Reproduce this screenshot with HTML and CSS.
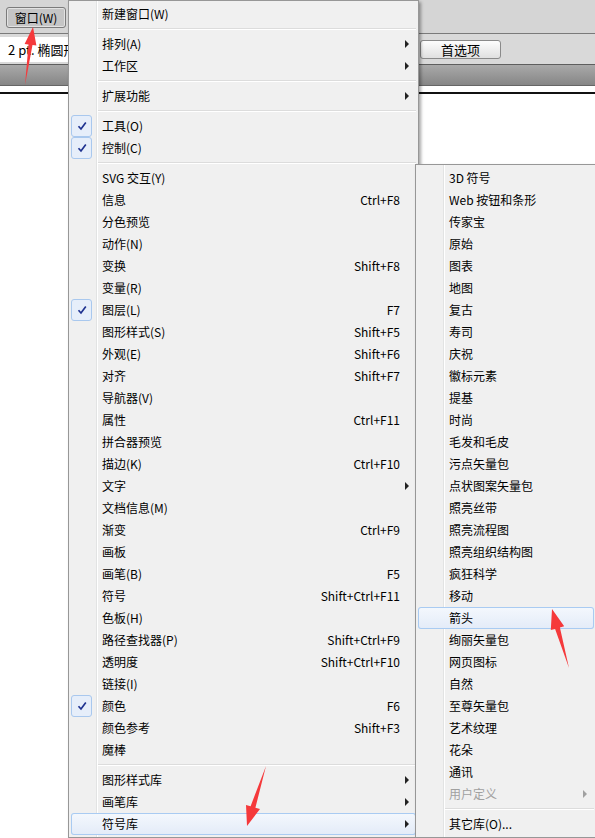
FILE: index.html
```html
<!DOCTYPE html>
<html lang="zh-CN">
<head>
<meta charset="utf-8">
<link rel="stylesheet" href="styles.css">
</head>
<body>
<div class="app">
  <div class="toolbar"><span class="winbtn">窗口(W)</span></div>
  <div class="ctrlbar">
    <div class="field">2 pt. 椭圆形</div>
    <span class="prefs">首选项</span>
  </div>
  <div class="tabbar"></div>
  <div class="doc"><div class="artboard"></div></div>
</div>

<div class="menu main-menu">
  <div class="item"><span></span><span class="label">新建窗口(W)</span><span></span><span></span></div>
  <div class="sep"></div>
  <div class="item"><span></span><span class="label">排列(A)</span><span></span><span class="arrow"></span></div>
  <div class="item"><span></span><span class="label">工作区</span><span></span><span class="arrow"></span></div>
  <div class="sep"></div>
  <div class="item"><span></span><span class="label">扩展功能</span><span></span><span class="arrow"></span></div>
  <div class="sep"></div>
  <div class="item"><span class="check"><svg width="12" height="12" viewBox="0 0 12 12"><path d="M2.5 6.2 L5 9 L9.8 2.6" fill="none" stroke="#1f3290" stroke-width="1.7"/></svg></span><span class="label">工具(O)</span><span></span><span></span></div>
  <div class="item"><span class="check"><svg width="12" height="12" viewBox="0 0 12 12"><path d="M2.5 6.2 L5 9 L9.8 2.6" fill="none" stroke="#1f3290" stroke-width="1.7"/></svg></span><span class="label">控制(C)</span><span></span><span></span></div>
  <div class="sep"></div>
  <div class="item"><span></span><span class="label">SVG 交互(Y)</span><span></span><span></span></div>
  <div class="item"><span></span><span class="label">信息</span><span class="key">Ctrl+F8</span><span></span></div>
  <div class="item"><span></span><span class="label">分色预览</span><span></span><span></span></div>
  <div class="item"><span></span><span class="label">动作(N)</span><span></span><span></span></div>
  <div class="item"><span></span><span class="label">变换</span><span class="key">Shift+F8</span><span></span></div>
  <div class="item"><span></span><span class="label">变量(R)</span><span></span><span></span></div>
  <div class="item"><span class="check"><svg width="12" height="12" viewBox="0 0 12 12"><path d="M2.5 6.2 L5 9 L9.8 2.6" fill="none" stroke="#1f3290" stroke-width="1.7"/></svg></span><span class="label">图层(L)</span><span class="key">F7</span><span></span></div>
  <div class="item"><span></span><span class="label">图形样式(S)</span><span class="key">Shift+F5</span><span></span></div>
  <div class="item"><span></span><span class="label">外观(E)</span><span class="key">Shift+F6</span><span></span></div>
  <div class="item"><span></span><span class="label">对齐</span><span class="key">Shift+F7</span><span></span></div>
  <div class="item"><span></span><span class="label">导航器(V)</span><span></span><span></span></div>
  <div class="item"><span></span><span class="label">属性</span><span class="key">Ctrl+F11</span><span></span></div>
  <div class="item"><span></span><span class="label">拼合器预览</span><span></span><span></span></div>
  <div class="item"><span></span><span class="label">描边(K)</span><span class="key">Ctrl+F10</span><span></span></div>
  <div class="item"><span></span><span class="label">文字</span><span></span><span class="arrow"></span></div>
  <div class="item"><span></span><span class="label">文档信息(M)</span><span></span><span></span></div>
  <div class="item"><span></span><span class="label">渐变</span><span class="key">Ctrl+F9</span><span></span></div>
  <div class="item"><span></span><span class="label">画板</span><span></span><span></span></div>
  <div class="item"><span></span><span class="label">画笔(B)</span><span class="key">F5</span><span></span></div>
  <div class="item"><span></span><span class="label">符号</span><span class="key">Shift+Ctrl+F11</span><span></span></div>
  <div class="item"><span></span><span class="label">色板(H)</span><span></span><span></span></div>
  <div class="item"><span></span><span class="label">路径查找器(P)</span><span class="key">Shift+Ctrl+F9</span><span></span></div>
  <div class="item"><span></span><span class="label">透明度</span><span class="key">Shift+Ctrl+F10</span><span></span></div>
  <div class="item"><span></span><span class="label">链接(I)</span><span></span><span></span></div>
  <div class="item"><span class="check"><svg width="12" height="12" viewBox="0 0 12 12"><path d="M2.5 6.2 L5 9 L9.8 2.6" fill="none" stroke="#1f3290" stroke-width="1.7"/></svg></span><span class="label">颜色</span><span class="key">F6</span><span></span></div>
  <div class="item"><span></span><span class="label">颜色参考</span><span class="key">Shift+F3</span><span></span></div>
  <div class="item"><span></span><span class="label">魔棒</span><span></span><span></span></div>
  <div class="sep"></div>
  <div class="item"><span></span><span class="label">图形样式库</span><span></span><span class="arrow"></span></div>
  <div class="item"><span></span><span class="label">画笔库</span><span></span><span class="arrow"></span></div>
  <div class="item hot"><span></span><span class="label">符号库</span><span></span><span class="arrow"></span></div>
</div>

<div class="menu sub-menu">
  <div class="item"><span></span><span class="label">3D 符号</span><span></span><span></span></div>
  <div class="item"><span></span><span class="label">Web 按钮和条形</span><span></span><span></span></div>
  <div class="item"><span></span><span class="label">传家宝</span><span></span><span></span></div>
  <div class="item"><span></span><span class="label">原始</span><span></span><span></span></div>
  <div class="item"><span></span><span class="label">图表</span><span></span><span></span></div>
  <div class="item"><span></span><span class="label">地图</span><span></span><span></span></div>
  <div class="item"><span></span><span class="label">复古</span><span></span><span></span></div>
  <div class="item"><span></span><span class="label">寿司</span><span></span><span></span></div>
  <div class="item"><span></span><span class="label">庆祝</span><span></span><span></span></div>
  <div class="item"><span></span><span class="label">徽标元素</span><span></span><span></span></div>
  <div class="item"><span></span><span class="label">提基</span><span></span><span></span></div>
  <div class="item"><span></span><span class="label">时尚</span><span></span><span></span></div>
  <div class="item"><span></span><span class="label">毛发和毛皮</span><span></span><span></span></div>
  <div class="item"><span></span><span class="label">污点矢量包</span><span></span><span></span></div>
  <div class="item"><span></span><span class="label">点状图案矢量包</span><span></span><span></span></div>
  <div class="item"><span></span><span class="label">照亮丝带</span><span></span><span></span></div>
  <div class="item"><span></span><span class="label">照亮流程图</span><span></span><span></span></div>
  <div class="item"><span></span><span class="label">照亮组织结构图</span><span></span><span></span></div>
  <div class="item"><span></span><span class="label">疯狂科学</span><span></span><span></span></div>
  <div class="item"><span></span><span class="label">移动</span><span></span><span></span></div>
  <div class="item hot"><span></span><span class="label">箭头</span><span></span><span></span></div>
  <div class="item"><span></span><span class="label">绚丽矢量包</span><span></span><span></span></div>
  <div class="item"><span></span><span class="label">网页图标</span><span></span><span></span></div>
  <div class="item"><span></span><span class="label">自然</span><span></span><span></span></div>
  <div class="item"><span></span><span class="label">至尊矢量包</span><span></span><span></span></div>
  <div class="item"><span></span><span class="label">艺术纹理</span><span></span><span></span></div>
  <div class="item"><span></span><span class="label">花朵</span><span></span><span></span></div>
  <div class="item"><span></span><span class="label">通讯</span><span></span><span></span></div>
  <div class="item disabled"><span></span><span class="label">用户定义</span><span></span><span class="arrow"></span></div>
  <div class="sep"></div>
  <div class="item"><span></span><span class="label">其它库(O)...</span><span></span><span></span></div>
</div>

<svg class="annot" width="595" height="838" viewBox="0 0 595 838">
  <polygon points="33,27 36.4,45.6 32.5,45.1 25,85 28.5,44.5 24.6,44" fill="#f5393b"/>
  <polygon points="247,826 246,805 250.6,806.2 266,766 255.4,807.8 260,809" fill="#f5393b"/>
  <polygon points="552,609 564.2,626.3 559.9,627.5 569,668 555.1,628.9 550.8,630.1" fill="#f5393b"/>
</svg>
</body>
</html>
```
FILE: styles.css
```css
* { box-sizing: border-box; }
html, body { margin: 0; padding: 0; }
body {
  width: 595px;
  height: 838px;
  overflow: hidden;
  position: relative;
  background: #fff;
  font-family: "Noto Sans CJK SC", "Noto Sans", sans-serif;
  font-size: 12px;
  color: #000;
}

/* background application */
.toolbar {
  height: 34px;
  background: #d5d5d5;
  border-bottom: 1px solid #7a7a7a;
  padding: 7px 0 0 6px;
}
.winbtn {
  display: inline-block;
  width: 60px;
  height: 21px;
  line-height: 19px;
  text-align: center;
  border: 1px solid #7b7b7b;
  border-radius: 3px;
  background: #c5c5c5;
  box-shadow: inset 0 0 0 1px #e2e2e2;
  font-size: 12px;
}
.ctrlbar {
  height: 31px;
  background: #d9d9d9;
  border-bottom: 1px solid #5e5e5e;
  display: flex;
  align-items: center;
}
.field {
  width: 80px;
  height: 25px;
  background: #fff;
  line-height: 25px;
  padding-left: 8px;
  font-size: 13px;
  white-space: nowrap;
  overflow: hidden;
}
.prefs {
  margin-left: 340px;
  width: 81px;
  height: 19px;
  border: 1px solid #8a8a8a;
  border-radius: 3px;
  background: linear-gradient(#fdfdfd, #e0e0e0);
  text-align: center;
  line-height: 17px;
  font-size: 13px;
}
.tabbar {
  height: 21px;
  background: linear-gradient(#a9a9a9, #868686);
  border-bottom: 1px solid #666;
}
.doc {
  padding-top: 6px;
}
.artboard {
  border-top: 2px solid #111;
  height: 700px;
}

/* menus */
.menu {
  position: absolute;
  border: 1px solid #979797;
  padding: 2px;
  box-shadow: 2px 2px 3px rgba(0, 0, 0, 0.35);
  background:
    linear-gradient(to right, transparent 27px, #e2e3e3 27px, #e2e3e3 28px, #fff 28px, #fff 29px, transparent 29px),
    #f0f0f0;
}
.main-menu {
  left: 68px;
  top: 0;
  width: 351px;
}
.sub-menu {
  left: 415px;
  top: 164px;
  width: 182px;
}
.item {
  display: grid;
  grid-template-columns: 31px 1fr auto 16px;
  align-items: center;
  height: 22px;
  line-height: 20px;
  white-space: nowrap;
  border-radius: 3px;
}
.label, .key {
  padding-bottom: 1px;
}
.key {
  text-align: right;
}
.arrow {
  width: 0;
  height: 0;
  margin-left: 5px;
  border-left: 4px solid #222;
  border-top: 4px solid transparent;
  border-bottom: 4px solid transparent;
}
.check {
  width: 21px;
  height: 22px;
  border: 1px solid #a9c8ee;
  border-radius: 3px;
  background: #e6eefa;
  display: flex;
  align-items: center;
  justify-content: center;
}
.check svg { display: block; }
.sep {
  height: 8px;
  margin-left: 27px;
  background: linear-gradient(to bottom, transparent 3px, #dcdcdc 3px, #dcdcdc 4px, #fff 4px, #fff 5px, transparent 5px);
}
.hot {
  background: linear-gradient(#f4f8fd, #e3ebf8);
  box-shadow: inset 0 0 0 1px #a9cbf2;
}
.disabled { color: #a0a0a0; }
.disabled .arrow { border-left-color: #a0a0a0; }

.annot {
  position: absolute;
  left: 0;
  top: 0;
  pointer-events: none;
}
```
